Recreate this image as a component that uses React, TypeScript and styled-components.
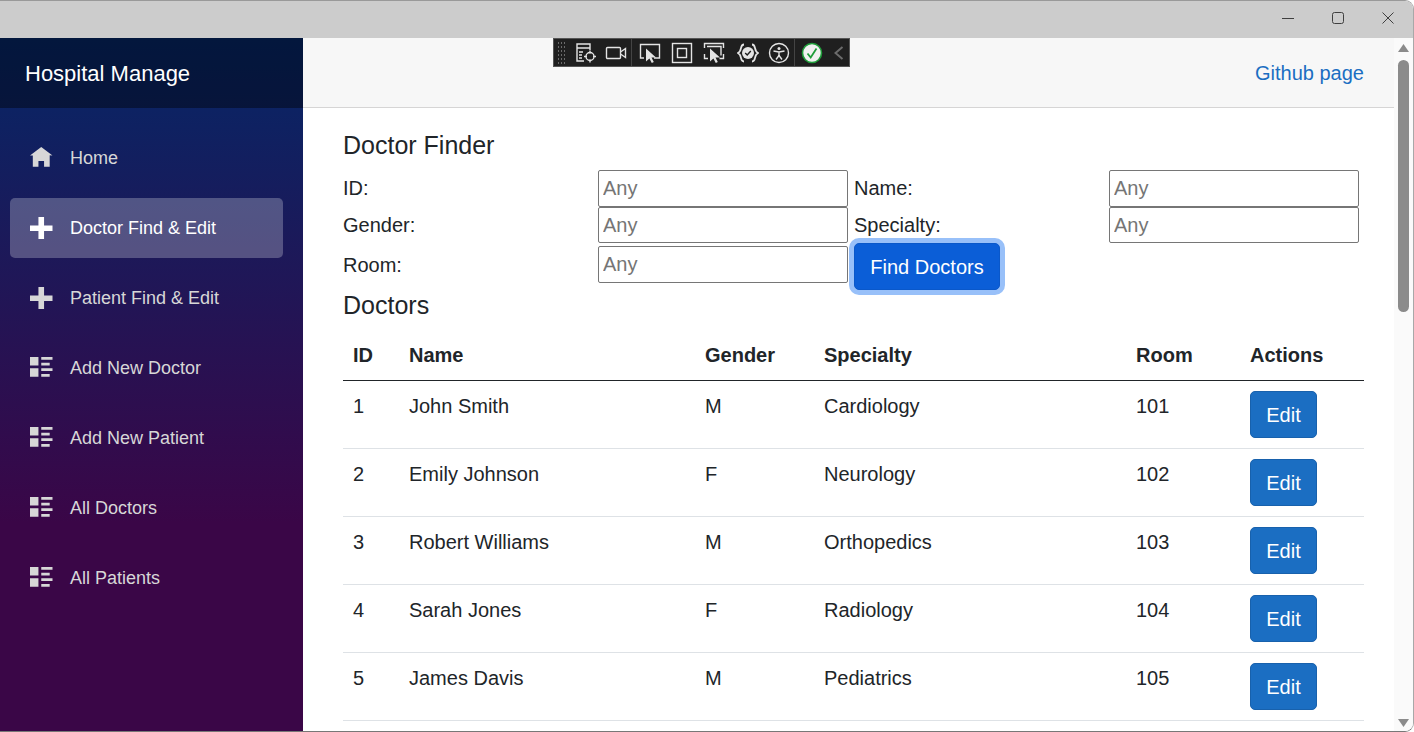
import React from 'react'
import styled, { createGlobalStyle } from 'styled-components'

// Style
const GlobalStyle = createGlobalStyle`
  html, body {
    margin: 0;
    padding: 0;
    height: 100%;
    overflow: hidden;
    background: #ffffff;
  }
  * {
    box-sizing: border-box;
  }
`

const Frame = styled.div`
  width: 1414px;
  height: 732px;
  display: flex;
  flex-direction: column;
  overflow: hidden;
  position: relative;
  border-top: 1px solid #999999;
  border-bottom: 1px solid #777777;
  border-right: 1px solid #a8a8a8;
  border-radius: 0 9px 9px 0;
  font-family: 'Liberation Sans', Arial, sans-serif;
  font-size: 20px;
  line-height: 30px;
  color: #212529;
`

const TitleBar = styled.div`
  height: 37px;
  flex: none;
  display: flex;
  justify-content: flex-end;
  background: #cccccc;
`

const WindowButton = styled.div`
  width: 50px;
  height: 34px;
  display: flex;
  align-items: center;
  justify-content: center;
  color: #3f3f3f;
`

const Body = styled.div`
  flex: 1;
  min-height: 0;
  display: flex;
`

const Sidebar = styled.aside`
  width: 303px;
  flex: none;
  background-image: linear-gradient(180deg, #052767 0%, #3a0647 70%);
`

const Brand = styled.div`
  height: 70px;
  display: flex;
  align-items: center;
  padding: 2px 0 0 25px;
  background: rgba(0, 0, 0, 0.4);
  color: #ffffff;
  font-size: 22px;
`

const Nav = styled.nav`
  display: flex;
  flex-direction: column;
  gap: 10px;
  padding: 20px 20px 0 10px;
`

const NavLink = styled.a<{ $active?: boolean }>`
  height: 60px;
  display: flex;
  align-items: center;
  padding-left: 20px;
  border-radius: 5px;
  font-size: 18px;
  color: ${(p) => (p.$active ? '#ffffff' : '#d7d7d7')};
  background: ${(p) => (p.$active ? 'rgba(255, 255, 255, 0.25)' : 'transparent')};
`

const NavIcon = styled.svg`
  width: 22.5px;
  height: 22.5px;
  margin-right: 17.5px;
  fill: currentColor;
`

const Main = styled.main`
  flex: 1;
  min-width: 0;
  display: flex;
  flex-direction: column;
`

const TopRow = styled.div`
  height: 70px;
  flex: none;
  display: flex;
  align-items: center;
  justify-content: flex-end;
  padding-right: 30px;
  background: #f7f7f7;
  border-bottom: 1px solid #d6d5d5;
`

const GithubLink = styled.a`
  color: #1b6ec2;
`

const Content = styled.div`
  padding: 22px 30px 0 40px;
`

const Heading = styled.h3`
  margin: 0 0 10px;
  font-size: 25px;
  line-height: 30px;
  font-weight: 400;
`

const FinderGrid = styled.div`
  display: grid;
  grid-template-columns: 255px 250px 255px 256px;
  grid-template-rows: 37px 36px 43px;
  margin-bottom: 4px;
  align-items: center;
`

const FieldLabel = styled.label<{ $second?: boolean; $flush?: boolean }>`
  padding-left: ${(p) => (p.$second ? '6px' : '0')};
  margin-top: ${(p) => (p.$flush ? '0' : '-1px')};
`

const FieldInput = styled.input<{ $second?: boolean }>`
  width: 250px;
  height: 36.5px;
  padding: 1px 4px;
  margin-left: ${(p) => (p.$second ? '6px' : '0')};
  border: 1px solid #767676;
  border-radius: 2px;
  background: #ffffff;
  font-family: inherit;
  font-size: 20px;
  color: #212529;

  &::placeholder {
    color: #757575;
    opacity: 1;
  }
`

const FindButton = styled.button`
  align-self: start;
  justify-self: start;
  margin-left: 6px;
  width: 146px;
  height: 47px;
  padding: 2px 0 0;
  border: 1px solid #0a58ca;
  border-radius: 5px;
  background: #0b5ed7;
  box-shadow: 0 0 0 5px #98c0f9;
  color: #ffffff;
  font-family: inherit;
  font-size: 20px;
`

const Table = styled.table`
  width: 1021px;
  table-layout: fixed;
  border-collapse: collapse;
`

const HeadCell = styled.th`
  padding: 10px;
  text-align: left;
  font-weight: 700;
  border-bottom: 1px solid #212529;
`

const Cell = styled.td`
  padding: 10px;
  vertical-align: top;
  border-bottom: 1px solid #dee2e6;
`

const EditButton = styled.button`
  display: block;
  width: 67px;
  height: 47px;
  padding: 2px 0 0;
  border: 1px solid #1861ac;
  border-radius: 5px;
  background: #1b6ec2;
  color: #ffffff;
  font-family: inherit;
  font-size: 20px;
`

const ScrollBar = styled.div`
  width: 19px;
  flex: none;
  display: flex;
  flex-direction: column;
  align-items: center;
  background: #fafafa;
`

const ScrollArrow = styled.svg<{ $down?: boolean }>`
  width: 11px;
  height: 8px;
  flex: none;
  fill: #8b8b8b;
  margin-top: ${(p) => (p.$down ? 'auto' : '6px')};
  margin-bottom: ${(p) => (p.$down ? '4px' : '0')};
  transform: ${(p) => (p.$down ? 'rotate(180deg)' : 'none')};
`

const ScrollThumb = styled.div`
  width: 11px;
  height: 252px;
  margin-top: 8px;
  border-radius: 6px;
  background: #8b8b8b;
`

const DebugBar = styled.div`
  position: absolute;
  top: 37px;
  left: 553px;
  width: 297px;
  height: 29px;
  display: flex;
  align-items: center;
  padding-left: 3px;
  background: #1f1f1f;
  border: 1px solid #555555;
  color: #e4e4e4;
`

const Gripper = styled.div`
  width: 9px;
  height: 23px;
  margin-right: 9px;
  background-image: radial-gradient(#6a6a6a 0.7px, transparent 0.8px);
  background-size: 3px 4px;
`

const DebugIcon = styled.svg<{ $gap?: number }>`
  width: 22px;
  height: 22px;
  flex: none;
  margin-right: ${(p) => p.$gap ?? 8}px;
  fill: none;
  stroke: currentColor;
  stroke-width: 1.4;
`

const StatusIcon = styled(DebugIcon)`
  stroke: #1f9d3a;
`

const CollapseIcon = styled.svg`
  width: 10px;
  height: 14px;
  flex: none;
  fill: none;
  stroke: #6b6b6b;
  stroke-width: 2;
`

const DebugSeparator = styled.div<{ $gap?: number }>`
  width: 1px;
  height: 27px;
  flex: none;
  margin-right: ${(p) => p.$gap ?? 7}px;
  background: #444444;
`

// Data
const HOME = 'M4 0l-4 3h1v4h2v-2h2v2h2v-4.03l1 .03-4-3z'
const PLUS = 'M3 0v3h-3v2h3v3h2v-3h3v-2h-3v-3h-2z'
const LIST =
  'M0 0v3h3v-3h-3zm4 0v1h4v-1h-4zm0 2v1h3v-1h-3zm-4 2v3h3v-3h-3zm4 0v1h4v-1h-4zm0 2v1h3v-1h-3z'

const NAV_ITEMS = [
  { label: 'Home', icon: HOME },
  { label: 'Doctor Find & Edit', icon: PLUS, active: true },
  { label: 'Patient Find & Edit', icon: PLUS },
  { label: 'Add New Doctor', icon: LIST },
  { label: 'Add New Patient', icon: LIST },
  { label: 'All Doctors', icon: LIST },
  { label: 'All Patients', icon: LIST },
]

const DOCTORS = [
  { id: 1, name: 'John Smith', gender: 'M', specialty: 'Cardiology', room: 101 },
  { id: 2, name: 'Emily Johnson', gender: 'F', specialty: 'Neurology', room: 102 },
  { id: 3, name: 'Robert Williams', gender: 'M', specialty: 'Orthopedics', room: 103 },
  { id: 4, name: 'Sarah Jones', gender: 'F', specialty: 'Radiology', room: 104 },
  { id: 5, name: 'James Davis', gender: 'M', specialty: 'Pediatrics', room: 105 },
]

const COLUMN_WIDTHS = [56, 296, 119, 312, 114, 124]

const POINTER = 'M7 6.5v13l3.4-3 2.4 4.6 2-1-2.3-4.5h4.5z'

// Component
const DebugToolbar = () => (
  <DebugBar>
    <Gripper />
    <DebugIcon viewBox='0 0 22 22' $gap={8}>
      <path d='M9 19H2V2h13v6M2 6h13M4 10h4M4 13h3M4 16h3' />
      <circle cx='15' cy='14.5' r='4' />
      <path d='M15 8.5v3M15 17.5v3M9 14.5h3M18 14.5h3' />
    </DebugIcon>
    <DebugIcon viewBox='0 0 22 22' $gap={4}>
      <rect x='1.5' y='5.5' width='14' height='11' rx='1' />
      <path d='M15.5 10l5-3.5v9l-5-3.5' />
    </DebugIcon>
    <DebugSeparator $gap={7} />
    <DebugIcon viewBox='0 0 22 22' $gap={10}>
      <path d='M5 16H1.5V2.5h19V16H15' />
      <path d={POINTER} fill='#e4e4e4' stroke='none' />
    </DebugIcon>
    <DebugIcon viewBox='0 0 22 22' $gap={10}>
      <rect x='1.5' y='1.5' width='19' height='19' />
      <rect x='6.5' y='6.5' width='9' height='9' />
    </DebugIcon>
    <DebugIcon viewBox='0 0 22 22' $gap={12}>
      <path d='M1.5 6V1.5h5M15.5 1.5h5V6M20.5 12v4.5h-4M1.5 12v4.5H5M6 1.5h10M4 4.5h14v9' />
      <path d={POINTER} fill='#e4e4e4' stroke='none' />
    </DebugIcon>
    <DebugIcon viewBox='0 0 22 22' $gap={9}>
      <path
        d='M7 2.500C2.500 2.500 5.500 9 1 11c4.500 2 1.500 8.500 6 8.500M15 2.500c4.500 0 1.500 6.500 6 8.500-4.500 2-1.500 8.500-6 8.500'
        strokeWidth='1.8'
      />
      <circle cx='11' cy='11' r='6' fill='#e4e4e4' stroke='none' />
      <path d='M8.200 11l2 2 3.600-4' stroke='#1f1f1f' />
    </DebugIcon>
    <DebugIcon viewBox='0 0 22 22' $gap={4}>
      <circle cx='11' cy='11' r='9.5' />
      <circle cx='11' cy='6.5' r='1.5' fill='#e4e4e4' stroke='none' />
      <path d='M5.500 9l5.500 1 5.500-1M11 10v3.500M11 13.500l-3 4M11 13.500l3 4' />
    </DebugIcon>
    <DebugSeparator $gap={6} />
    <StatusIcon viewBox='0 0 22 22' $gap={11}>
      <circle cx='11' cy='11' r='9.5' fill='#f1f1f1' strokeWidth='1.6' />
      <path d='M6.500 11.500l3.200 4 5.800-9' strokeWidth='1.8' />
    </StatusIcon>
    <CollapseIcon viewBox='0 0 10 14'>
      <path d='M8.500 1L1.500 7l7 6' />
    </CollapseIcon>
  </DebugBar>
)

const App = () => {
  return (
    <Frame>
      <GlobalStyle />
      <TitleBar>
        <WindowButton>
          <svg width='12' height='12' viewBox='0 0 12 12' stroke='currentColor' fill='none'>
            <path d='M0 6.5h12' />
          </svg>
        </WindowButton>
        <WindowButton>
          <svg width='12' height='12' viewBox='0 0 12 12' stroke='currentColor' fill='none'>
            <rect x='.5' y='.5' width='11' height='11' rx='2' />
          </svg>
        </WindowButton>
        <WindowButton>
          <svg width='12' height='12' viewBox='0 0 12 12' stroke='currentColor' fill='none'>
            <path d='M.5.5l11 11M11.5.5l-11 11' />
          </svg>
        </WindowButton>
      </TitleBar>
      <Body>
        <Sidebar>
          <Brand>Hospital Manage</Brand>
          <Nav>
            {NAV_ITEMS.map((item) => (
              <NavLink key={item.label} $active={item.active}>
                <NavIcon viewBox='0 0 8 8'>
                  <path d={item.icon} />
                </NavIcon>
                {item.label}
              </NavLink>
            ))}
          </Nav>
        </Sidebar>
        <Main>
          <TopRow>
            <GithubLink>Github page</GithubLink>
          </TopRow>
          <Content>
            <Heading>Doctor Finder</Heading>
            <FinderGrid>
              <FieldLabel>ID:</FieldLabel>
              <FieldInput placeholder='Any' />
              <FieldLabel $second>Name:</FieldLabel>
              <FieldInput placeholder='Any' $second />
              <FieldLabel>Gender:</FieldLabel>
              <FieldInput placeholder='Any' />
              <FieldLabel $second>Specialty:</FieldLabel>
              <FieldInput placeholder='Any' $second />
              <FieldLabel $flush>Room:</FieldLabel>
              <FieldInput placeholder='Any' />
              <FindButton>Find Doctors</FindButton>
            </FinderGrid>
            <Heading>Doctors</Heading>
            <Table>
              <colgroup>
                {COLUMN_WIDTHS.map((width, index) => (
                  <col key={index} width={width} />
                ))}
              </colgroup>
              <thead>
                <tr>
                  <HeadCell>ID</HeadCell>
                  <HeadCell>Name</HeadCell>
                  <HeadCell>Gender</HeadCell>
                  <HeadCell>Specialty</HeadCell>
                  <HeadCell>Room</HeadCell>
                  <HeadCell>Actions</HeadCell>
                </tr>
              </thead>
              <tbody>
                {DOCTORS.map((doctor) => (
                  <tr key={doctor.id}>
                    <Cell>{doctor.id}</Cell>
                    <Cell>{doctor.name}</Cell>
                    <Cell>{doctor.gender}</Cell>
                    <Cell>{doctor.specialty}</Cell>
                    <Cell>{doctor.room}</Cell>
                    <Cell>
                      <EditButton>Edit</EditButton>
                    </Cell>
                  </tr>
                ))}
              </tbody>
            </Table>
          </Content>
        </Main>
        <ScrollBar>
          <ScrollArrow viewBox='0 0 11 8'>
            <path d='M5.5 0L11 8H0z' />
          </ScrollArrow>
          <ScrollThumb />
          <ScrollArrow viewBox='0 0 11 8' $down>
            <path d='M5.5 0L11 8H0z' />
          </ScrollArrow>
        </ScrollBar>
      </Body>
      <DebugToolbar />
    </Frame>
  )
}

export default App
